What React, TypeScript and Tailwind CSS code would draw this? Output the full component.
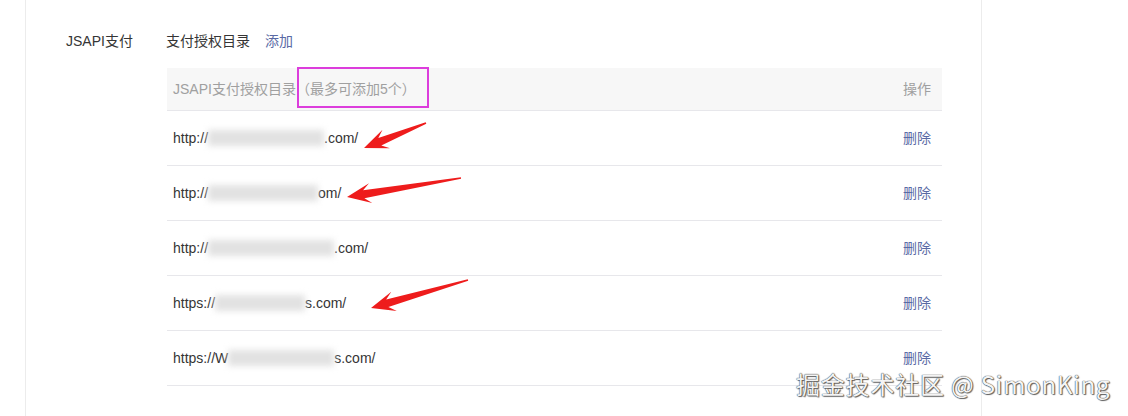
import React from "react";

type Pt = [number, number];

function arrowPoints(t: Pt, h: Pt): string {
  const dx = h[0] - t[0];
  const dy = h[1] - t[1];
  const len = Math.hypot(dx, dy);
  const ux = dx / len;
  const uy = dy / len;
  const nx = -uy;
  const ny = ux;
  const headLen = 24;
  const base: Pt = [h[0] - ux * headLen, h[1] - uy * headLen];
  const back: Pt = [h[0] - ux * (headLen - 7), h[1] - uy * (headLen - 7)];
  const p = (pt: Pt, w: number): string => `${(pt[0] + nx * w).toFixed(1)},${(pt[1] + ny * w).toFixed(1)}`;
  return [
    p(t, 0.8),
    p(back, 4),
    p(base, 10),
    `${h[0]},${h[1]}`,
    p(base, -10),
    p(back, -4),
    p(t, -0.8),
  ].join(" ");
}

const rows: { pre: string; blur: number; post: string }[] = [
  { pre: "http://", blur: 116, post: ".com/" },
  { pre: "http://", blur: 110, post: "om/" },
  { pre: "http://", blur: 126, post: ".com/" },
  { pre: "https://", blur: 90, post: "s.com/" },
  { pre: "https://W", blur: 106, post: "s.com/" },
];

export default function App() {
  return (
    <div
      className="relative w-[1128px] h-[416px] bg-white overflow-hidden"
      style={{ fontFamily: '"Liberation Sans", "Noto Sans CJK SC", sans-serif' }}
    >
      <div className="ml-[25px] w-[957px] h-[416px] border-x border-[#ececec]">
        <div className="flex pl-[40px] pt-[32px] text-[14px] leading-[18px] text-[#353535]">
          <div className="w-[100px]">JSAPI支付</div>
          <div className="flex flex-col">
            <div className="flex gap-[15px]">
              <span>支付授权目录</span>
              <span className="text-[#5a6aa5]">添加</span>
            </div>
            <div className="mt-[18px] ml-[1px] w-[775px]">
              <div className="flex items-center justify-between h-[43px] bg-[#f7f7f7] border-b border-[#e7e7eb] pl-[6px] pr-[11px] text-[#a0a0a0]">
                <span>JSAPI支付授权目录（最多可添加5个）</span>
                <span>操作</span>
              </div>
              {rows.map((r, i) => (
                <div
                  key={i}
                  className="flex items-center justify-between h-[55px] border-b border-[#e7e7eb] pl-[6px] pr-[11px]"
                >
                  <span className="flex items-center text-[#353535]">
                    <span>{r.pre}</span>
                    <span
                      className="inline-block h-[16px] bg-[#e2e2e2] blur-[3px]"
                      style={{ width: r.blur }}
                    />
                    <span>{r.post}</span>
                  </span>
                  <span className="text-[#5a6aa5]">删除</span>
                </div>
              ))}
            </div>
          </div>
        </div>
      </div>

      <div className="absolute left-[297px] top-[67px] w-[132px] h-[41px] border-2 border-[#dc3ddc]" />

      <svg className="absolute left-0 top-0" width="1128" height="416" viewBox="0 0 1128 416">
        <polygon points={arrowPoints([426, 123], [364, 148])} fill="#ee1c1c" />
        <polygon points={arrowPoints([461, 178], [347, 197])} fill="#ee1c1c" />
        <polygon points={arrowPoints([468, 280], [371, 308])} fill="#ee1c1c" />
      </svg>

      <div
        className="absolute left-[796px] top-[368px] text-[24px] leading-[32px] text-[#f4f4f4] tracking-[0.8px]"
        style={{
          fontFamily: '"Noto Sans CJK SC", "Noto Sans", sans-serif',
          textShadow: "0 0 1px #444, 0 0 1px #444, 1px 1px 1px #666",
        }}
      >
        掘金技术社区 @ SimonKing
      </div>
    </div>
  );
}
